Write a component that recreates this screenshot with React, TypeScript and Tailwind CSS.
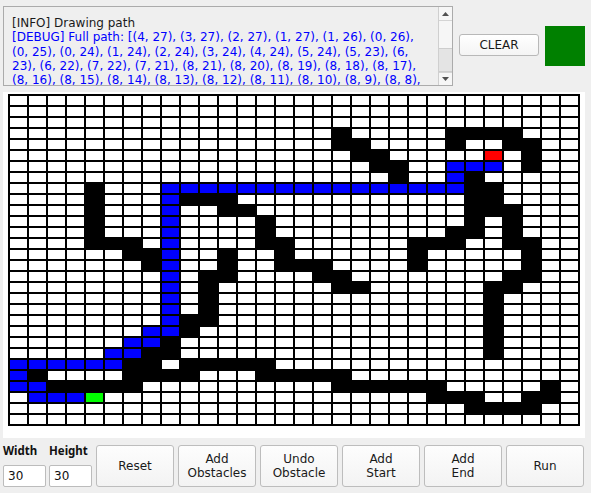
import React from "react"

// obstacle columns per row (30x30 maze)
const OBSTACLES: Record<number, number[]> = {
  3: [17, 23, 24, 25, 26],
  4: [17, 18, 23, 26, 27],
  5: [18, 19, 27],
  6: [19, 20, 27],
  7: [20, 24],
  8: [4, 24, 25],
  9: [4, 9, 10, 11, 24, 25],
  10: [4, 11, 12, 24, 25, 26],
  11: [4, 13, 24, 26],
  12: [4, 13, 23, 24, 26],
  13: [4, 5, 6, 13, 14, 21, 22, 23, 26, 27],
  14: [6, 7, 11, 14, 21, 27],
  15: [7, 11, 14, 15, 16, 21, 27],
  16: [10, 11, 16, 17, 26, 27],
  17: [10, 17, 18, 25, 26],
  18: [10, 25],
  19: [10, 25],
  20: [9, 10, 25],
  21: [9, 25],
  22: [8, 25],
  23: [7, 8, 25],
  24: [6, 7, 9, 10, 11, 12, 13],
  25: [1, 6, 7, 8, 9, 13, 14, 15, 16, 17],
  26: [2, 3, 4, 5, 6, 17, 18, 19, 20, 21, 22, 28],
  27: [22, 23, 24, 27, 28],
  28: [24, 25, 26, 27],
}

const PATH: [number, number][] = [
  [3, 27], [2, 27], [1, 27], [1, 26], [0, 26], [0, 25], [0, 24], [1, 24], [2, 24],
  [3, 24], [4, 24], [5, 24], [5, 23], [6, 23], [6, 22], [7, 22], [7, 21], [8, 21],
  [8, 20], [8, 19], [8, 18], [8, 17], [8, 16], [8, 15], [8, 14], [8, 13], [8, 12],
  [8, 11], [8, 10], [8, 9], [8, 8], [9, 8], [10, 8], [11, 8], [12, 8], [13, 8],
  [14, 8], [15, 8], [16, 8], [17, 8], [18, 8], [19, 8], [20, 8], [21, 8], [22, 8],
  [23, 8], [23, 7], [23, 6], [24, 6], [25, 6],
]

const START = [4, 27]
const END = [25, 5]

const LOG_LINES = [
  "(0, 25), (0, 24), (1, 24), (2, 24), (3, 24), (4, 24), (5, 24), (5, 23), (6,",
  "23), (6, 22), (7, 22), (7, 21), (8, 21), (8, 20), (8, 19), (8, 18), (8, 17),",
  "(8, 16), (8, 15), (8, 14), (8, 13), (8, 12), (8, 11), (8, 10), (8, 9), (8, 8),",
]

function cellClass(c: number, r: number) {
  if (c === START[0] && r === START[1]) return "bg-[#00ff00]"
  if (c === END[0] && r === END[1]) return "bg-[#ff0000]"
  if (PATH.some(([x, y]) => x === c && y === r)) return "bg-[#0000ff]"
  if (OBSTACLES[r]?.includes(c)) return "bg-black"
  return "bg-white"
}

function Arrow({ up }: { up?: boolean }) {
  return (
    <svg width="7" height="4" viewBox="0 0 7 4">
      <path d={up ? "M0 4 L3.5 0 L7 4 Z" : "M0 0 L3.5 4 L7 0 Z"} fill="#505050" />
    </svg>
  )
}

function LogBox() {
  return (
    <div className="flex w-[450px] h-[80px] border border-[#ababab] bg-[#efefef]">
      <div className="flex-1 overflow-hidden pl-[8px] pt-[9px] text-[12px] leading-[14.25px] whitespace-nowrap">
        <div className="text-[#1a1a1a]">[INFO] Drawing path</div>
        <div className="text-[#0000ff]">
          [DEBUG] Full path: [(4, 27), (3, 27), (2, 27), (1, 27), (1, 26), (0, 26),
        </div>
        {LOG_LINES.map((l) => (
          <div key={l} className="text-[#0000ff]">
            {l}
          </div>
        ))}
      </div>
      {/* scrollbar */}
      <div className="w-[14px] flex flex-col border-l border-[#cfcfcf] bg-[#f6f6f6]">
        <div className="h-[14px] flex items-center justify-center border-b border-[#d4d4d4]">
          <Arrow up />
        </div>
        <div className="flex-1 relative">
          <div className="absolute left-0 right-0 top-[27px] bottom-0 bg-[#e4e4e4] border-y border-[#cdcdcd]" />
        </div>
        <div className="h-[13px] flex items-center justify-center border-t border-[#d4d4d4]">
          <Arrow />
        </div>
      </div>
    </div>
  )
}

function Btn({ lines }: { lines: string[] }) {
  return (
    <button className="w-[78px] h-[42px] flex flex-col items-center justify-center rounded-[3px] border border-[#bdbdbd] bg-gradient-to-b from-[#fdfdfd] to-[#f3f3f3] text-[12px] leading-[14px] text-[#1a1a1a]">
      {lines.map((l) => (
        <span key={l}>{l}</span>
      ))}
    </button>
  )
}

function SizeField({ label }: { label: string }) {
  return (
    <div className="w-[43px] h-[42px] flex flex-col justify-between">
      <div className="font-['Noto_Sans',sans-serif] font-bold text-[11.5px] leading-[12px] text-[#111]">
        {label}
      </div>
      <div className="h-[22px] rounded-[2px] border border-[#bcbcbc] bg-white pl-[4px] text-[12px] leading-[20px] text-[#111]">
        30
      </div>
    </div>
  )
}

export default function App() {
  const rows = Array.from({ length: 30 }, (_, r) => r)
  const cols = Array.from({ length: 30 }, (_, c) => c)

  return (
    <div className="w-[591px] h-[493px] overflow-hidden bg-[#efefef] px-[3px] pt-[6px] font-['DejaVu_Sans',sans-serif]">
      {/* Log + controls */}
      <div className="flex items-start">
        <LogBox />
        <button className="ml-[6px] mt-[28px] w-[80px] h-[22px] rounded-[3px] border border-[#b8b8b8] bg-gradient-to-b from-[#ffffff] to-[#f4f4f4] text-[12px] leading-[20px] text-[#1a1a1a]">
          CLEAR
        </button>
        <div className="ml-[6px] mt-[20px] w-[40px] h-[40px] bg-[#008000]" />
      </div>

      {/* Grid canvas */}
      <div className="mt-[6px] w-[582px] h-[346px] bg-white pl-[5px] pt-[2px]">
        <div className="w-[572px] bg-black p-[2px] grid grid-cols-[repeat(30,17px)] auto-rows-[9px] gap-[2px]">
          {rows.map((r) =>
            cols.map((c) => <div key={`${r}-${c}`} className={cellClass(c, r)} />)
          )}
        </div>
      </div>

      {/* Bottom controls */}
      <div className="mt-[7px] flex">
        <SizeField label="Width" />
        <div className="ml-[3px]">
          <SizeField label="Height" />
        </div>
        <div className="ml-[4px] flex gap-[4px]">
          <Btn lines={["Reset"]} />
          <Btn lines={["Add", "Obstacles"]} />
          <Btn lines={["Undo", "Obstacle"]} />
          <Btn lines={["Add", "Start"]} />
          <Btn lines={["Add", "End"]} />
          <Btn lines={["Run"]} />
        </div>
      </div>
    </div>
  )
}
